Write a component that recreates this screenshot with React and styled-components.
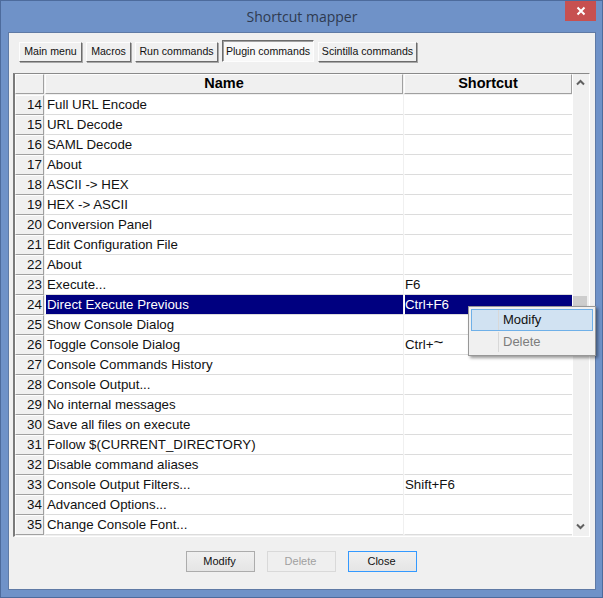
import React from "react";
import styled, { createGlobalStyle } from "styled-components";

const Global = createGlobalStyle`
  html, body { margin: 0; padding: 0; background: #6f92c8; }
  body { width: 603px; height: 598px; overflow: hidden; font-family: "Open Sans", "Liberation Sans", sans-serif; }
`;

const Frame = styled.div`
  position: relative;
  width: 603px;
  height: 598px;
  box-sizing: border-box;
  background: #6f92c8;
  border: 1px solid #4d6b9c;
  display: flex;
  flex-direction: column;
  padding: 0 6px 7px 7px;
`;
const TitleBar = styled.div`
  height: 30px;
  flex: none;
  display: flex;
  align-items: center;
  justify-content: center;
  font-size: 14px;
  color: #2e3a50;
  padding-bottom: 1px;
`;
const CloseButton = styled.div`
  position: absolute;
  top: 0;
  right: 6px;
  width: 31px;
  height: 20px;
  background: #c75050;
  display: flex;
  align-items: center;
  justify-content: center;
`;
const Client = styled.div`
  flex: 1;
  background: #f0f0f0;
  border: 1px solid #5f7aa5;
  display: flex;
  flex-direction: column;
  padding: 9px 5px 0 4px;
  min-height: 0;
`;
const Tabs = styled.div`
  display: flex;
  gap: 4px;
  align-items: flex-end;
  padding-left: 6px;
  height: 21px;
  margin-top: -1px;
`;
const Tab = styled.div`
  box-sizing: border-box;
  flex: none;
  height: ${p => (p.$active ? 22 : 20)}px;
  width: ${p => p.$w}px;
  text-align: center;
  font-family: "Liberation Sans", sans-serif;
  font-size: 10.6px;
  line-height: ${p => (p.$active ? 21 : 17)}px;
  color: #111;
  white-space: nowrap;
  background: ${p => (p.$active ? "#f8f8f8" : "#f0f0f0")};
  border: 1px solid;
  border-color: ${p =>
    p.$active ? "#6c6c6c #fdfdfd #fdfdfd #6c6c6c" : "#fdfdfd #6c6c6c #6c6c6c #fdfdfd"};
  box-shadow: ${p => (p.$active ? "inset 1px 1px 0 #a0a0a0" : "1px 1px 0 #a8a8a8")};
`;
const Grid = styled.div`
  margin-top: 11px;
  display: flex;
  height: 464px;
  border: 1px solid #fff;
  border-top: 1px solid #8a8a8a;
  border-left: 2px solid #7a7a7a;
  width: 577px;
  box-sizing: border-box;
  background: #f0f0f0;
  flex: none;
`;
const Table = styled.div`
  flex: none;
  width: 557px;
  display: grid;
  grid-template-columns: 29px 358px 168px;
  grid-template-rows: 21px;
  grid-auto-rows: 20px;
  column-gap: 1px;
  align-content: start;
`;
const Head = styled.div`
  box-sizing: border-box;
  height: 20px;
  background: #f0f0f0;
  border: 1px solid;
  border-color: #fdfdfd #a0a0a0 #a0a0a0 #fdfdfd;
  text-align: center;
  font-family: "Liberation Sans", sans-serif;
  font-weight: bold;
  font-size: 14.5px;
  line-height: 17px;
  color: #000;
`;
const RowNum = styled.div`
  box-sizing: border-box;
  height: 20px;
  background: #f0f0f0;
  border: 1px solid;
  border-color: #fdfdfd #a0a0a0 #a0a0a0 #fdfdfd;
  text-align: right;
  padding-right: 1px;
  font-family: "Liberation Sans", sans-serif;
  font-size: 13.4px;
  line-height: 18px;
  color: #111;
`;
const Cell = styled.div`
  box-sizing: border-box;
  height: 20px;
  border-left: 1px solid #fff;
  border-bottom: 1px solid #dcdcdc;
  padding-left: ${p => p.$pad}px;
  font-family: "Liberation Sans", sans-serif;
  font-size: 13.3px;
  line-height: 19px;
  color: ${p => (p.$selected ? "#fff" : "#111")};
  background: ${p => (p.$selected ? "#000080" : "#fff")};
  white-space: nowrap;
`;
const ScrollBar = styled.div`
  flex: 1;
  display: flex;
  flex-direction: column;
  border-left: 1px solid #fff;
  padding-right: 2px;
`;
const Arrow = styled.div`
  height: 17px;
  flex: none;
  display: flex;
  align-items: center;
  justify-content: center;
  margin-top: ${p => p.$push || 0}px;
`;
const Thumb = styled.div`
  height: 20px;
  flex: none;
  margin-top: 205px;
  background: #cdcdcd;
`;
const Footer = styled.div`
  display: flex;
  justify-content: center;
  gap: 12px;
  margin-top: 14px;
`;
const Button = styled.div`
  box-sizing: border-box;
  width: 69px;
  height: 21px;
  padding-right: 2px;
  font-family: "Liberation Sans", sans-serif;
  font-size: 11px;
  line-height: 19px;
  text-align: center;
  color: ${p => (p.$disabled ? "#a0a0a0" : "#111")};
  border: 1px solid ${p => (p.$disabled ? "#d9d9d9" : p.$focus ? "#3399ff" : "#acacac")};
  background: ${p => (p.$disabled ? "#efefef" : "linear-gradient(#f0f0f0, #e5e5e5)")};
`;
const Menu = styled.div`
  position: absolute;
  left: 467px;
  top: 305px;
  width: 128px;
  height: 50px;
  box-sizing: border-box;
  background: #f0f0f0;
  border: 1px solid #979797;
  box-shadow: 2px 2px 3px rgba(0, 0, 0, 0.4);
  padding: 2px;
  display: flex;
  flex-direction: column;
  font-family: "Liberation Sans", sans-serif;
  font-size: 13px;
`;
const MenuItem = styled.div`
  box-sizing: border-box;
  height: 22px;
  line-height: 20px;
  padding-left: 31px;
  color: ${p => (p.$disabled ? "#7d7d7d" : "#111")};
  border: 1px solid ${p => (p.$hot ? "#6fb0e8" : "transparent")};
  background: ${p => (p.$hot ? "#d1e2f2" : "transparent")};
  position: relative;
  &::before {
    content: "";
    position: absolute;
    left: 26px;
    top: 0;
    bottom: 0;
    width: 1px;
    background: #d8d8d8;
  }
`;
const Tilde = styled.span`
  font-size: 17px;
  line-height: 10px;
  vertical-align: 1px;
`;

const names = [
  ["Full URL Encode", ""], ["URL Decode", ""], ["SAML Decode", ""], ["About", ""],
  ["ASCII -> HEX", ""], ["HEX -> ASCII", ""], ["Conversion Panel", ""],
  ["Edit Configuration File", ""], ["About", ""], ["Execute...", "F6"],
  ["Direct Execute Previous", "Ctrl+F6"], ["Show Console Dialog", ""],
  ["Toggle Console Dialog", <>Ctrl+<Tilde>~</Tilde></>], ["Console Commands History", ""],
  ["Console Output...", ""], ["No internal messages", ""], ["Save all files on execute", ""],
  ["Follow $(CURRENT_DIRECTORY)", ""], ["Disable command aliases", ""],
  ["Console Output Filters...", "Shift+F6"], ["Advanced Options...", ""],
  ["Change Console Font...", ""],
];

const Chevron = ({ down }) => (
  <svg width="9" height="7" viewBox="0 0 9 7">
    <path d={down ? "M1 1.5 L4.5 5 L8 1.5" : "M1 5.5 L4.5 2 L8 5.5"} fill="none" stroke="#606060" strokeWidth="2" />
  </svg>
);

export default function App() {
  return (
    <>
      <Global />
      <Frame>
        <TitleBar>Shortcut mapper</TitleBar>
        <CloseButton>
          <svg width="10" height="10" viewBox="0 0 10 10">
            <path d="M1.5 1.5 L8.5 8.5 M8.5 1.5 L1.5 8.5" stroke="#fff" strokeWidth="2" />
          </svg>
        </CloseButton>
        <Client>
          <Tabs>
            <Tab $w={63}>Main menu</Tab>
            <Tab $w={45}>Macros</Tab>
            <Tab $w={83}>Run commands</Tab>
            <Tab $w={92} $active>Plugin commands</Tab>
            <Tab $w={99}>Scintilla commands</Tab>
          </Tabs>
          <Grid>
            <Table>
              <Head />
              <Head>Name</Head>
              <Head>Shortcut</Head>
              {names.map(([n, s], i) => (
                <React.Fragment key={i}>
                  <RowNum>{i + 14}</RowNum>
                  <Cell $pad={1} $selected={i === 10}>{n}</Cell>
                  <Cell $pad={0} $selected={i === 10}>{s}</Cell>
                </React.Fragment>
              ))}
            </Table>
            <ScrollBar>
              <Arrow><Chevron /></Arrow>
              <Thumb />
              <Arrow $push={202}><Chevron down /></Arrow>
            </ScrollBar>
          </Grid>
          <Footer>
            <Button>Modify</Button>
            <Button $disabled>Delete</Button>
            <Button $focus>Close</Button>
          </Footer>
        </Client>
        <Menu>
          <MenuItem $hot>Modify</MenuItem>
          <MenuItem $disabled>Delete</MenuItem>
        </Menu>
      </Frame>
    </>
  );
}
